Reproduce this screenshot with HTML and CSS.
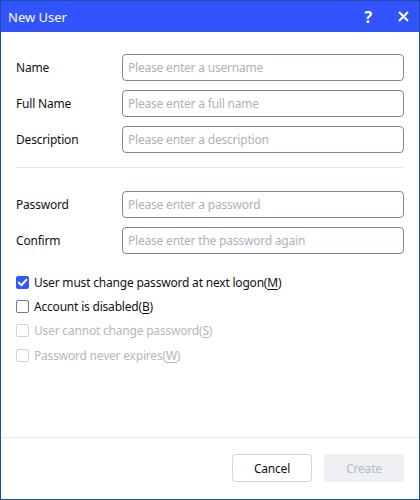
FILE: index.html
```html
<!DOCTYPE html>
<html>
<head>
<meta charset="utf-8">
<link rel="stylesheet" href="styles.css">
</head>
<body>
<div class="window">
  <div class="titlebar">
    <span class="title">New User</span>
    <span class="help">?</span>
    <svg class="close" width="11" height="11" viewBox="0 0 11 11"><path d="M1 1 L10 10 M10 1 L1 10" stroke="#fff" stroke-width="2" fill="none"/></svg>
  </div>
  <div class="content">
    <div class="fields">
      <div class="row"><label class="label">Name</label><input class="input" placeholder="Please enter a username"></div>
      <div class="row"><label class="label">Full Name</label><input class="input" placeholder="Please enter a full name"></div>
      <div class="row"><label class="label">Description</label><input class="input" placeholder="Please enter a description"></div>
    </div>
    <div class="divider"></div>
    <div class="fields">
      <div class="row"><label class="label">Password</label><input class="input" placeholder="Please enter a password"></div>
      <div class="row"><label class="label">Confirm</label><input class="input" placeholder="Please enter the password again"></div>
    </div>
    <div class="checks">
      <div class="check"><span class="box checked"><svg width="13" height="13" viewBox="0 0 13 13"><path d="M2.8 6.6 L5.4 9.2 L10.4 3.8" stroke="#fff" stroke-width="2" fill="none" stroke-linecap="round" stroke-linejoin="round"/></svg></span><span class="text">User must change password at next logon(<u>M</u>)</span></div>
      <div class="check"><span class="box"></span><span class="text">Account is disabled(<u>B</u>)</span></div>
      <div class="check disabled"><span class="box"></span><span class="text">User cannot change password(<u>S</u>)</span></div>
      <div class="check disabled"><span class="box"></span><span class="text">Password never expires(<u>W</u>)</span></div>
    </div>
  </div>
  <div class="footer">
    <button class="btn cancel">Cancel</button>
    <button class="btn create">Create</button>
  </div>
</div>
</body>
</html>
```
FILE: styles.css
```css
* { box-sizing: border-box; }
html, body { margin: 0; padding: 0; background: #fff; }
body { font-family: "Noto Sans", "DejaVu Sans", sans-serif; font-size: 12px; color: #111; letter-spacing: -0.2px; }
.window {
  width: 420px; height: 500px;
  border: 1px solid #1b4ea6;
  display: flex; flex-direction: column;
  background: #fff;
}
.titlebar {
  height: 31px; flex: none;
  background: #3254fe;
  color: #fff;
  display: flex; align-items: center;
  padding: 0 10px 0 7px;
}
.title { font-size: 13px; flex: 1; letter-spacing: 0; }
.help { font-size: 16px; font-weight: bold; margin-right: 26px; line-height: 1; }
.close { display: block; }
.content { flex: 1; padding: 22px 15px 0 15px; }
.fields { display: flex; flex-direction: column; gap: 9px; }
.row { display: flex; align-items: center; height: 27px; }
.label { width: 106px; flex: none; }
.input {
  flex: 1; height: 27px;
  border: 1px solid #7c8798;
  border-radius: 4px;
  padding: 0 5px;
  font-family: inherit; font-size: 12px; letter-spacing: -0.2px;
  color: #111;
  outline: none;
}
.input::placeholder { color: #aeb1ba; }
.divider { height: 1px; background: #e6e8f0; margin: 14px 0 23px; }
.checks { margin-top: 16px; display: flex; flex-direction: column; }
.check { display: flex; align-items: center; height: 24.4px; }
.box {
  width: 13px; height: 13px; flex: none;
  border: 1px solid #6e7888; border-radius: 2px;
  margin-right: 5px; display: flex;
}
.box.checked { background: #3356fe; border-color: #3356fe; }
.box.checked svg { margin: -1px; }
.check .text { color: #111; }
.check u { text-underline-offset: 2px; }
.check.disabled .box { border-color: #cfd3da; }
.check.disabled .text { color: #b4b7bf; }
.footer {
  flex: none; height: 62px;
  border-top: 1px solid #e6e8f0;
  display: flex; justify-content: flex-end; align-items: flex-start;
  gap: 12px;
  padding: 16px 15px 0 0;
}
.btn {
  width: 80px; height: 28px;
  border-radius: 4px;
  font-family: inherit; font-size: 12px; letter-spacing: -0.2px;
}
.cancel { background: #fff; border: 1px solid #cdd3df; color: #111; }
.create { background: #eef0f4; border: 1px solid #eef0f4; color: #b8bcc6; }
```
